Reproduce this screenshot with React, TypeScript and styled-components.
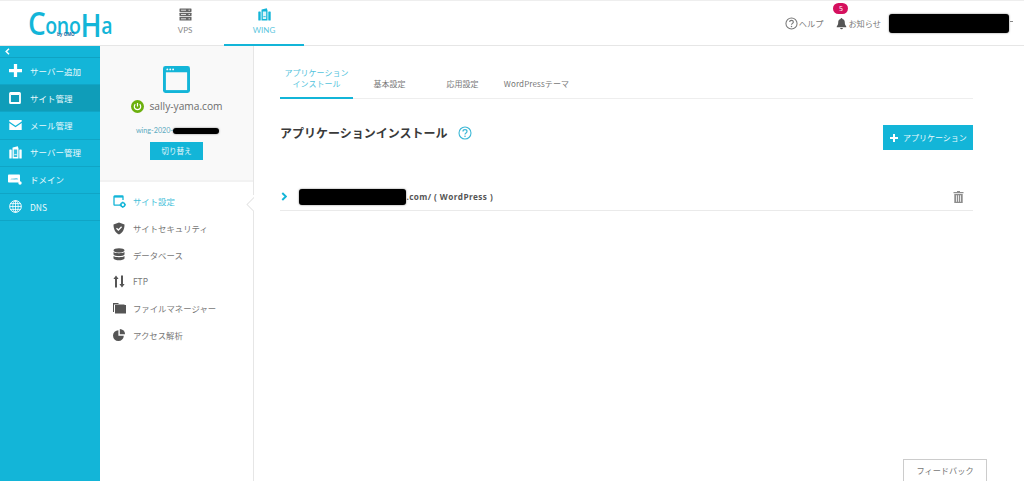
import React from "react";
import styled, { createGlobalStyle } from "styled-components";

const Global = createGlobalStyle`
  html, body { margin: 0; padding: 0; background: #fff; }
  * { box-sizing: border-box; }
  body { font-family: "Noto Sans CJK JP", "Noto Sans", sans-serif; color: #666; overflow: hidden; }
`;
const BLUE = "#13b5d8";

const Page = styled.div`
  position: relative; width: 1024px; height: 481px; overflow: hidden;
  display: flex; flex-direction: column;
`;
const Header = styled.header`
  height: 46px; flex: none; display: flex; align-items: stretch;
  border-top: 1px solid #eeeeee; border-bottom: 1px solid #e6e6e6; background: #fff;
`;
const LogoBox = styled.div`width: 145px; flex: none; position: relative; padding: 0 0 0 28px; display: flex; align-items: flex-start;`;
const LogoText = styled.span`
  font-family: "Open Sans", sans-serif; font-weight: 600; font-size: 33px; line-height: 44px; color: ${BLUE};
  letter-spacing: -0.6px; height: 44px; white-space: nowrap; transform: scaleX(0.85); transform-origin: left center;
`;
const LogoSmall = styled.span`font-size: 23px; letter-spacing: -0.4px; vertical-align: 3px;`;
const LogoC = styled.span`vertical-align: 2px;`;
const LogoBy = styled.span`
  position: absolute; left: 57px; top: 31px; font: 700 4.6px/5px "Liberation Sans", sans-serif; color: #17689c; white-space: nowrap;
`;
const NavTab = styled.div<{ $active?: boolean }>`
  width: 80px; flex: none; display: flex; flex-direction: column; align-items: center; padding-top: 7px;
  font-size: 8px; line-height: 12px; gap: 3px; color: ${p => (p.$active ? "#5bc6de" : "#888")};
  border-bottom: 2px solid ${p => (p.$active ? BLUE : "transparent")}; margin-bottom: -1px;
  margin-left: ${p => (p.$active ? "-1px" : "0")};
  font-family: "Lato", "Noto Sans CJK JP", sans-serif;
`;
const HeaderRight = styled.div`
  margin-left: auto; display: flex; align-items: center; padding: 0 15px 0 0; font-size: 8.2px; color: #777; height: 100%;
`;
const HeadItem = styled.div<{ $gap: number }>`
  display: flex; align-items: center; gap: 1px; margin-right: ${p => p.$gap}px; position: relative;
`;
const Badge = styled.span`
  position: absolute; left: -3px; top: -14px; width: 15px; height: 11px; border-radius: 6px;
  background: #d5105e; color: #fff; font-size: 7px; line-height: 11px; text-align: center;
`;
const Redact = styled.span<{ $w: number; $h: number; $r?: number }>`
  display: inline-block; width: ${p => p.$w}px; height: ${p => p.$h}px; flex: none;
  background: #000; border-radius: ${p => p.$r ?? 3}px; box-shadow: 0 0 2px rgba(0,0,0,.55);
`;
const Caret = styled.span`
  position: absolute; left: 1010px; top: 21px; width: 3px; height: 1px; background: #888;
`;
const Body = styled.div`flex: 1; display: flex; min-height: 0;`;
const Side = styled.nav`width: 100px; flex: none; background: ${BLUE}; color: #fff;`;
const Collapse = styled.div`
  height: 12px; padding-left: 5px; display: flex; align-items: center; border-bottom: 1px solid #0fa3c3;
`;
const SideItem = styled.div<{ $active?: boolean }>`
  height: 27.2px; display: flex; align-items: center; font-size: 8.5px; padding-bottom: 1px;
  background: ${p => (p.$active ? "#0f9db9" : "transparent")}; border-bottom: 1px solid #10a5c6; color: #e9f9fc;
`;
const SideIcon = styled.span`width: 30px; flex: none; display: flex; justify-content: center; svg { display: block; }`;
const SubCol = styled.div`
  width: 154px; flex: none; display: flex; flex-direction: column; border-right: 1px solid #e6e6e6;
`;
const SiteCard = styled.div`
  height: 136px; flex: none; background: #f9f9f9; border-bottom: 2px solid #f2f2f2;
  display: flex; flex-direction: column; align-items: center; padding-top: 20px;
`;
const SiteName = styled.div`
  margin-top: 6px; display: flex; align-items: center; gap: 5px; font: 400 10.2px/14px "Open Sans", sans-serif; color: #6c6c6c; margin-left: 1px;
`;
const WingId = styled.div`
  margin-top: 13px; display: flex; align-items: center; font: 400 7.2px/10px "Lato", sans-serif; color: #5ba9bf; margin-left: 2px;
`;
const SwitchBtn = styled.div`
  margin-top: 6px; width: 53px; height: 18px; background: ${BLUE}; color: #e6f8fb; font-size: 7.6px; line-height: 18px; text-align: center;
`;
const SubList = styled.div`padding-top: 6px; position: relative; flex: 1;`;
const Notch = styled.span`
  position: absolute; right: -1px; top: 13px; width: 8px; height: 16px; background: #fff; overflow: hidden;
  &::before { content: ""; position: absolute; left: 3px; top: 2.5px; width: 11px; height: 11px; background: #fff; border: 1px solid #e6e6e6; transform: rotate(45deg); }
`;
const SubItem = styled.div<{ $active?: boolean }>`
  height: 26.7px; display: flex; align-items: center; font-size: 8.4px; padding-left: 13px;
  color: ${p => (p.$active ? "#45bfda" : "#777")};
`;
const SubIcon = styled.span`width: 20px; flex: none; svg { display: block; }`;
const Main = styled.main`flex: 1; padding: 18px 51px 0 26px; min-width: 0;`;
const Tabs = styled.div`display: flex; border-bottom: 1px solid #eeeeee; height: 35px; align-items: stretch;`;
const Tab = styled.div<{ $active?: boolean }>`
  width: 73px; flex: none; font-size: 8px; line-height: 11px; text-align: center; margin-bottom: -1px;
  display: flex; align-items: flex-end; justify-content: center; padding-bottom: 8px; white-space: pre-line;
  color: ${p => (p.$active ? "#53c3dc" : "#777")};
  border-bottom: 2px solid ${p => (p.$active ? BLUE : "transparent")};
`;
const TabLatin = styled.span`letter-spacing: 0.12px; padding-left: 2px;`;
const TitleRow = styled.div`display: flex; align-items: flex-start; justify-content: space-between; margin-top: 25px; height: 61px;`;
const Title = styled.h1`
  margin: 0; font-size: 12px; line-height: 17px; font-weight: 700; color: #3a3a3a; display: flex; align-items: center; gap: 10px;
  svg { display: block; }
`;
const AddBtn = styled.div`
  width: 90px; height: 25px; display: flex; align-items: center; gap: 5px; padding-left: 7px; background: ${BLUE};
  color: #e8f9fc; font-size: 8px; margin-top: 1px; svg { display: block; }
`;
const AppRow = styled.div`
  height: 26px; display: flex; align-items: center; border-bottom: 1px solid #eaeaea; padding: 0 9px 2px 1px;
  svg { display: block; }
`;
const RowRedact = styled(Redact)`margin-left: 12px;`;
const AppText = styled.span`
  font: 700 8.2px/10px "Open Sans", "Noto Sans CJK JP", sans-serif; color: #555; letter-spacing: 0.42px; white-space: pre;
`;
const Push = styled.span`margin-left: auto;`;
const Feedback = styled.div`
  position: absolute; left: 903px; top: 459px; width: 84px; height: 24px; border: 1px solid #ccc; background: #fff;
  font-size: 8.2px; line-height: 21px; text-align: center; color: #777;
`;

const Help = ({ c = "#777", s = 13 }: { c?: string; s?: number }) => (
  <svg width={s} height={s} viewBox="0 0 14 14" fill="none">
    <circle cx="7" cy="7" r="6" stroke={c} strokeWidth="1.1" />
    <path d="M5 5.4C5 4.2 6 3.6 7 3.6s2 .7 2 1.8c0 1.5-2 1.5-2 3" stroke={c} strokeWidth="1.2" />
    <circle cx="7" cy="10.3" r=".8" fill={c} />
  </svg>
);
const Bell = () => (
  <svg width="11" height="13" viewBox="0 0 12 13" fill="#555">
    <path d="M6 .5a1 1 0 0 1 1 1c2 .4 2.6 2 2.6 4 0 2 .6 3 1.6 4.2v.8H.8v-.8C1.800 8.500 2.400 7.500 2.400 5.500c0-2 .6-3.600 2.600-4a1 1 0 0 1 1-1Z" />
    <path d="M4.500 11.300h3a1.500 1.500 0 0 1-3 0Z" />
  </svg>
);
const Server = () => (
  <svg width="13" height="13" viewBox="0 0 13 13">
    <g fill="#666"><rect x="0.500" y="0.500" width="12" height="3.500" rx=".4" /><rect x="0.500" y="4.800" width="12" height="3.500" rx=".4" /><rect x="0.500" y="9.100" width="12" height="3.500" rx=".4" /></g>
    <g fill="#ddd"><rect x="2" y="1.700" width="5" height="1" /><rect x="2" y="6" width="5" height="1" /><rect x="2" y="10.300" width="5" height="1" /><rect x="9.500" y="1.700" width="1.500" height="1" /><rect x="9.500" y="6" width="1.500" height="1" /><rect x="9.500" y="10.300" width="1.500" height="1" /></g>
  </svg>
);
const Wing = ({ c = BLUE, s = 13, hole = "#fff" }: { c?: string; s?: number; hole?: string }) => (
  <svg width={s} height={s} viewBox="0 0 13 13">
    <path fill={c} d="M3.700 1.500 8.800.3 9.500 2.500v10H3.500V2Z" />
    <rect x="0.300" y="3.500" width="2.400" height="9" rx=".6" fill={c} />
    <rect x="10.300" y="3.500" width="2.400" height="9" rx=".6" fill={c} />
    <rect x="4.800" y="3.500" width="3.400" height="7.500" fill={hole} opacity=".85" />
    <rect x="5.300" y="8.300" width="2.400" height=".8" fill={c} />
  </svg>
);
const Win = ({ s = 27, c = BLUE }: { s?: number; c?: string }) => (
  <svg width={s} height={s} viewBox="0 0 28 28">
    <rect x="0" y="0" width="28" height="28" rx="2.500" fill={c} />
    <rect x="3" y="6.500" width="22" height="18.500" fill="#f9f9f9" />
    <g fill="#f9f9f9"><circle cx="4.500" cy="3.500" r="1" /><circle cx="7.500" cy="3.500" r="1" /><circle cx="10.500" cy="3.500" r="1" /></g>
  </svg>
);
const Plus = ({ s = 12, c = "#fff" }: { s?: number; c?: string }) => (
  <svg width={s} height={s} viewBox="0 0 12 12"><path fill={c} d="M4.500 0h3v4.500H12v3H7.500V12h-3V7.500H0v-3h4.500Z" /></svg>
);
const SiteIcon = () => (
  <svg width="12" height="12" viewBox="0 0 12 12" fill="none">
    <rect x="1" y="1" width="10" height="10" rx=".6" stroke="#fff" strokeWidth="1.800" />
    <rect x="2" y="2" width="8" height="1" fill="#fff" />
  </svg>
);
const Mail = () => (
  <svg width="13" height="10" viewBox="0 0 13 10"><path fill="#fff" d="M.3 0h12.400v1.600L6.500 5.800.3 1.600Zm0 3 6.200 4.200L12.700 3v7H.3Z" /></svg>
);
const Domain = () => (
  <svg width="14" height="11" viewBox="0 0 14 11">
    <rect x="0" y="0.500" width="12" height="8" rx=".8" fill="#fff" />
    <text x="2.200" y="6" fontSize="3.500" fill={BLUE} fontFamily="Liberation Sans">.com</text>
    <circle cx="12" cy="9" r="1.700" fill="#fff" />
  </svg>
);
const Globe = () => (
  <svg width="13" height="13" viewBox="0 0 13 13" fill="none" stroke="#fff" strokeWidth=".8">
    <circle cx="6.500" cy="6.500" r="5.800" strokeWidth="1" />
    <ellipse cx="6.500" cy="6.500" rx="2.700" ry="5.800" />
    <path d="M6.500.7v11.600M.7 6.500h11.600M1.500 3.600h10M1.500 9.400h10" />
  </svg>
);
const Power = () => (
  <svg width="13" height="13" viewBox="0 0 13 13" fill="none">
    <circle cx="6.500" cy="6.500" r="6.500" fill="#6cb00e" />
    <path d="M4.300 4.200a3.200 3.200 0 1 0 4.400 0" stroke="#fff" strokeWidth="1.200" />
    <path d="M6.500 3v3.500" stroke="#fff" strokeWidth="1.200" />
  </svg>
);
const Gear = () => (
  <svg width="13" height="13" viewBox="0 0 13 13" fill="none">
    <path d="M9 10.200H1.600a.6.6 0 0 1-.6-.6V1.600c0-.3.3-.6.600-.6h7.800c.3 0 .6.300.6.600V5" stroke={BLUE} strokeWidth="1.300" />
    <rect x="1" y="1" width="9" height="1.600" fill={BLUE} />
    <circle cx="9.800" cy="9.800" r="2" stroke={BLUE} strokeWidth="1.400" />
    <path d="M9.800 6.600v1M9.800 12v1M6.600 9.800h1M12 9.800h1" stroke={BLUE} strokeWidth="1" />
  </svg>
);
const Shield = () => (
  <svg width="12" height="13" viewBox="0 0 12 13">
    <path fill="#555" d="M6 .5 11.500 2.500C11.500 7 10 10.500 6 12.500 2 10.500.5 7 .5 2.500Z" />
    <path d="M3.500 6.200 5.400 8l3.200-3.200" stroke="#fff" strokeWidth="1.300" fill="none" />
  </svg>
);
const Db = () => (
  <svg width="12" height="13" viewBox="0 0 12 13" fill="#555">
    <ellipse cx="6" cy="2.400" rx="5.500" ry="2.200" />
    <path d="M.5 4c1.500 1.600 9.500 1.600 11 0v2.400c-1 2-10 2-11 0Z" />
    <path d="M.5 8c1.500 1.600 9.500 1.600 11 0v2.500c-1 2.400-10 2.400-11 0Z" />
  </svg>
);
const Arrows = () => (
  <svg width="12" height="13" viewBox="0 0 12 13" fill="#555">
    <path d="M3 .5 5.600 4H4v8.500H2V4H.4ZM9 12.500 6.400 9H8V.5h2V9h1.600Z" />
  </svg>
);
const Folder = () => (
  <svg width="13" height="12" viewBox="0 0 13 12" fill="#555">
    <path d="M0 1h5.500v1h6v.6H1v7.400H0Z" />
    <path d="M2 3h11v8.500H2Z" />
  </svg>
);
const Pie = () => (
  <svg width="12" height="12" viewBox="0 0 12 12" fill="#555">
    <path d="M5.400 1.200v5.500h5.400A5.400 5.400 0 1 1 5.400 1.200Z" />
    <path d="M6.800 0A5.200 5.200 0 0 1 12 5.300H6.800Z" />
  </svg>
);
const Trash = () => (
  <svg width="11" height="12" viewBox="0 0 11 12" fill="#8d8d8d">
    <path d="M4 0h3v1h3.500v1.300H.5V1H4Z" />
    <path d="M1.300 3h8.400v9H1.300ZM3 4.200v6.600h.8V4.200Zm2.100 0v6.600h.8V4.200Zm2.100 0v6.600H8V4.200Z" fillRule="evenodd" />
  </svg>
);
const Chevron = ({ dir = "right", c = BLUE, h = 7 }: { dir?: "left" | "right"; c?: string; h?: number }) => (
  <svg width={(h * 5) / 7} height={h} viewBox="0 0 5 7" fill="none">
    <path d={dir === "right" ? "M1 .8 3.800 3.500 1 6.200" : "M4 .8 1.200 3.500 4 6.200"} stroke={c} strokeWidth="1.500" />
  </svg>
);

const sideItems: [React.ReactNode, React.ReactNode, boolean?][] = [
  [<Plus s={13} />, "サーバー追加"],
  [<SiteIcon />, "サイト管理", true],
  [<Mail />, "メール管理"],
  [<Wing c="#fff" hole={BLUE} />, "サーバー管理"],
  [<Domain />, "ドメイン"],
  [<Globe />, "DNS"],
];
const subItems: [React.ReactNode, string, boolean?][] = [
  [<Gear />, "サイト設定", true],
  [<Shield />, "サイトセキュリティ"],
  [<Db />, "データベース"],
  [<Arrows />, "FTP"],
  [<Folder />, "ファイルマネージャー"],
  [<Pie />, "アクセス解析"],
];

export default function App() {
  return (
    <Page>
      <Global />
      <Header>
        <LogoBox>
          <LogoText><LogoC>C</LogoC><LogoSmall>ono</LogoSmall>H<LogoSmall>a</LogoSmall></LogoText>
          <LogoBy>by GMO</LogoBy>
        </LogoBox>
        <NavTab><Server />VPS</NavTab>
        <NavTab $active><Wing />WING</NavTab>
        <HeaderRight>
          <HeadItem $gap={13}><Help />ヘルプ</HeadItem>
          <HeadItem $gap={8}><Badge>5</Badge><Bell />お知らせ</HeadItem>
          <Redact $w={120} $h={19} />
        </HeaderRight>
        <Caret />
      </Header>
      <Body>
        <Side>
          <Collapse><Chevron dir="left" c="#fff" /></Collapse>
          {sideItems.map(([icon, label, active], i) => (
            <SideItem key={i} $active={active}><SideIcon>{icon}</SideIcon>{label}</SideItem>
          ))}
        </Side>
        <SubCol>
          <SiteCard>
            <Win />
            <SiteName><Power />sally-yama.com</SiteName>
            <WingId>wing-2020-<Redact $w={46} $h={6} $r={3} /></WingId>
            <SwitchBtn>切り替え</SwitchBtn>
          </SiteCard>
          <SubList>
            <Notch />
            {subItems.map(([icon, label, active], i) => (
              <SubItem key={i} $active={active}><SubIcon>{icon}</SubIcon>{label}</SubItem>
            ))}
          </SubList>
        </SubCol>
        <Main>
          <Tabs>
            <Tab $active>{"アプリケーション\nインストール"}</Tab>
            <Tab>基本設定</Tab>
            <Tab>応用設定</Tab>
            <Tab><TabLatin>WordPressテーマ</TabLatin></Tab>
          </Tabs>
          <TitleRow>
            <Title>アプリケーションインストール<Help c="#3db8d6" s={14} /></Title>
            <AddBtn><Plus s={8} />アプリケーション</AddBtn>
          </TitleRow>
          <AppRow>
            <Chevron h={9} />
            <RowRedact $w={107} $h={16} />
            <AppText>.com/ ( WordPress )</AppText>
            <Push />
            <Trash />
          </AppRow>
        </Main>
      </Body>
      <Feedback>フィードバック</Feedback>
    </Page>
  );
}
